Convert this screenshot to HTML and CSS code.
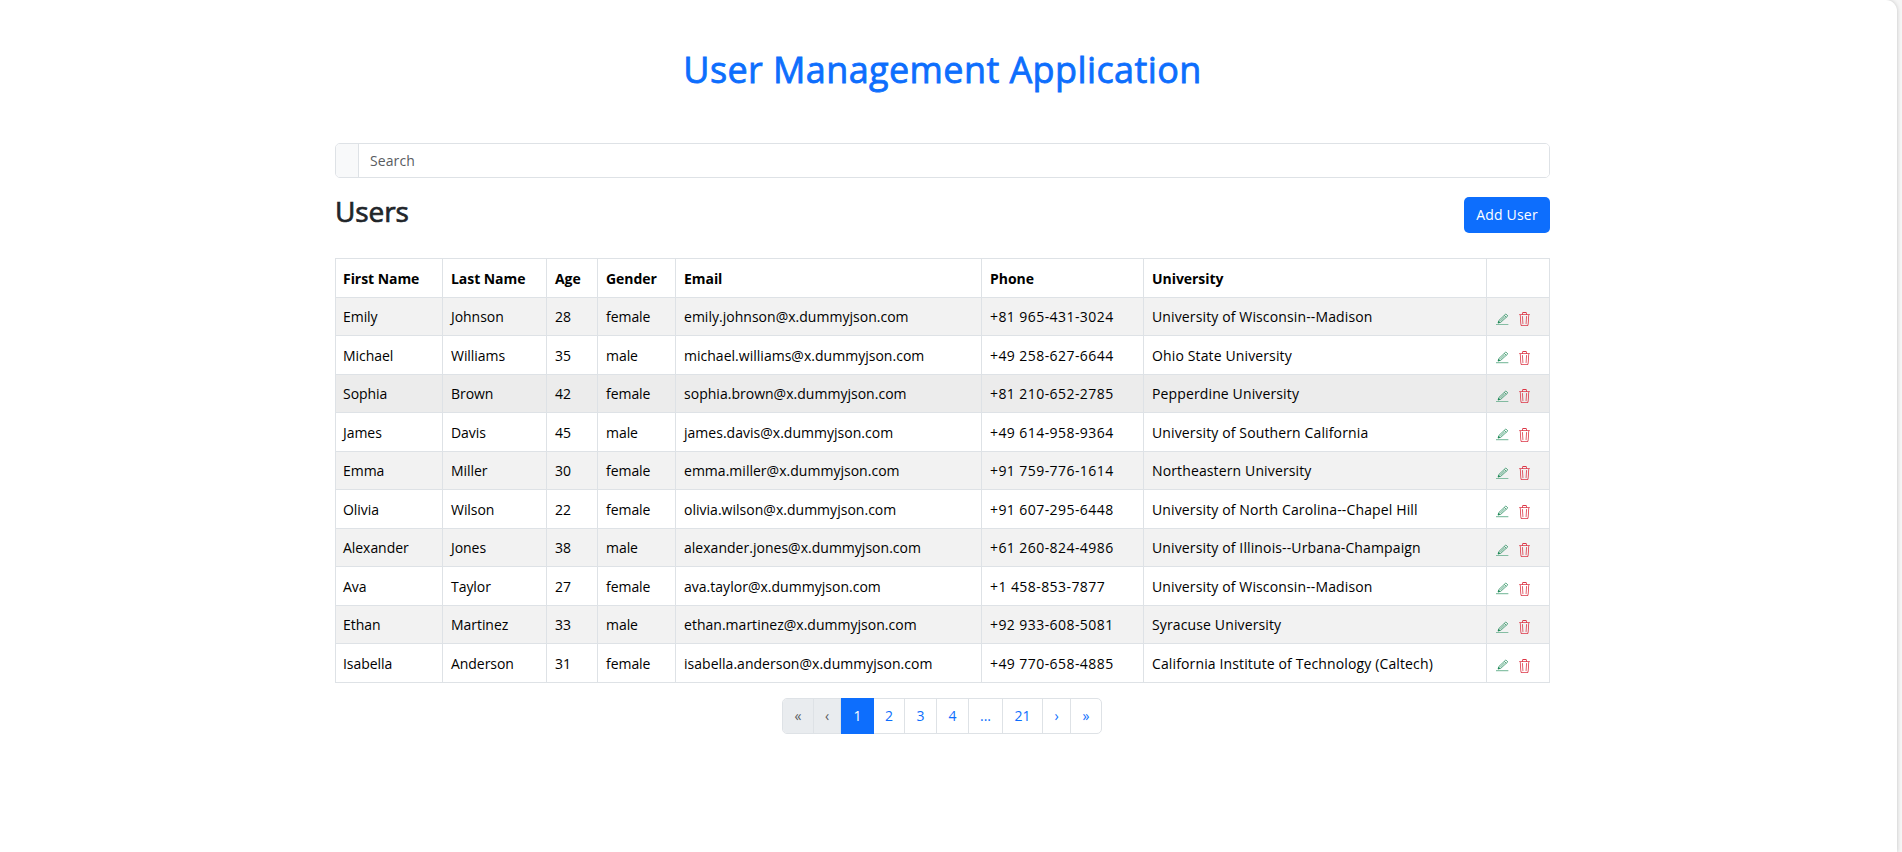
FILE: index.html
```html
<!DOCTYPE html>
<html lang="en">
<head>
<meta charset="utf-8">
<title>User Management Application</title>
<link rel="stylesheet" href="styles.css">
</head>
<body>
<svg class="sprite" width="0" height="0" aria-hidden="true">
  <symbol id="pen" viewBox="0 0 16 16">
    <path d="M12.500 1.200 15 3.700 6.300 11.600 2.600 12.800 3.800 9.300z M10.600 3l2.400 2.400 M5.600 10.200l5.500-5.500" fill="none" stroke="currentColor" stroke-width=".9"/>
    <path d="M2.400 13l.9-3.200 2.400 2.300z"/>
    <path d="M0 14.500h16v1.100H0z"/>
  </symbol>
  <symbol id="trash" viewBox="1 0 14 16" preserveAspectRatio="none">
    <path d="M6.5 1h3a.5.5 0 0 1 .5.5v1H6v-1a.5.5 0 0 1 .5-.5M11 2.5v-1A1.5 1.5 0 0 0 9.500 0h-3A1.500 1.500 0 0 0 5 1.500v1H1.500a.5.5 0 0 0 0 1h.538l.853 10.660A2 2 0 0 0 4.885 16h6.230a2 2 0 0 0 1.994-1.840l.853-10.660h.538a.5.5 0 0 0 0-1zm1.958 1-.846 10.580a1 1 0 0 1-.997.920h-6.230a1 1 0 0 1-.997-.920L3.042 3.500zm-7.487 1a.5.5 0 0 1 .528.470l.5 8.500a.5.5 0 0 1-.998.060L5 5.030a.5.5 0 0 1 .470-.530Zm5.058 0a.5.5 0 0 1 .470.530l-.5 8.500a.5.5 0 1 1-.998-.060l.5-8.500a.5.5 0 0 1 .528-.470"/>
  </symbol>
</svg>
<div class="shell">
  <main class="container">
    <h1 class="title">User Management Application</h1>
    <div class="search"><span class="search-addon"></span><input class="search-input" type="text" placeholder="Search"></div>
    <div class="toolbar"><h2 class="heading">Users</h2><button class="btn">Add User</button></div>
    <table class="users">
      <colgroup><col class="c-first"><col class="c-last"><col class="c-age"><col class="c-gender"><col class="c-email"><col class="c-phone"><col class="c-uni"><col class="c-act"></colgroup>
      <thead><tr><th>First Name</th><th>Last Name</th><th>Age</th><th>Gender</th><th>Email</th><th>Phone</th><th>University</th><th></th></tr></thead>
      <tbody id="rows"></tbody>
    </table>
    <ul class="pagination">
      <li class="page p-first disabled"><span class="arrow">«</span></li>
      <li class="page p-prev disabled"><span class="arrow">‹</span></li>
      <li class="page p-active">1</li>
      <li class="page p-two">2</li>
      <li class="page p-num">3</li>
      <li class="page p-num">4</li>
      <li class="page p-dots">...</li>
      <li class="page p-last-num">21</li>
      <li class="page p-next"><span class="arrow">›</span></li>
      <li class="page p-end"><span class="arrow">»</span></li>
    </ul>
  </main>
</div>
<script src="app.js"></script>
</body>
</html>
```

FILE: app.js
```js
const users = [
  ["Emily", "Johnson", 28, "female", "emily.johnson@x.dummyjson.com", "+81 965-431-3024", "University of Wisconsin--Madison"],
  ["Michael", "Williams", 35, "male", "michael.williams@x.dummyjson.com", "+49 258-627-6644", "Ohio State University"],
  ["Sophia", "Brown", 42, "female", "sophia.brown@x.dummyjson.com", "+81 210-652-2785", "Pepperdine University"],
  ["James", "Davis", 45, "male", "james.davis@x.dummyjson.com", "+49 614-958-9364", "University of Southern California"],
  ["Emma", "Miller", 30, "female", "emma.miller@x.dummyjson.com", "+91 759-776-1614", "Northeastern University"],
  ["Olivia", "Wilson", 22, "female", "olivia.wilson@x.dummyjson.com", "+91 607-295-6448", "University of North Carolina--Chapel Hill"],
  ["Alexander", "Jones", 38, "male", "alexander.jones@x.dummyjson.com", "+61 260-824-4986", "University of Illinois--Urbana-Champaign"],
  ["Ava", "Taylor", 27, "female", "ava.taylor@x.dummyjson.com", "+1 458-853-7877", "University of Wisconsin--Madison"],
  ["Ethan", "Martinez", 33, "male", "ethan.martinez@x.dummyjson.com", "+92 933-608-5081", "Syracuse University"],
  ["Isabella", "Anderson", 31, "female", "isabella.anderson@x.dummyjson.com", "+49 770-658-4885", "California Institute of Technology (Caltech)"]
];
const actions = '<td><div class="actions"><svg class="icon edit"><use href="#pen"/></svg><svg class="icon delete"><use href="#trash"/></svg></div></td>';
document.getElementById("rows").innerHTML = users.map((u, i) =>
  `<tr${i === 2 ? ' class="hovered"' : ""}>` + u.map(v => `<td><span>${v}</span></td>`).join("") + actions + "</tr>").join("");
```

FILE: styles.css
```css
* { box-sizing: border-box; }
body { margin: 0; height: 852px; overflow: hidden; background: #f5f5f5; color: #212529; font: 14px/21px "Open Sans", "Noto Sans", sans-serif; letter-spacing: -0.05px; }
.sprite { display: block; height: 0; }
.shell { width: 1897px; height: 852px; background: #fff; border-radius: 0 11px 0 0; box-shadow: 0 0 4px rgba(0,0,0,.2); padding-left: 335px; }
.container { width: 1215px; padding-top: 48px; }
.title { margin: 0; height: 95px; text-align: center; color: #0d6efd; font-size: 36px; line-height: 43px; font-weight: 500; letter-spacing: .4px; -webkit-text-stroke: .8px currentColor; }
.search { display: flex; height: 35px; border: 1px solid #dee2e6; border-radius: 5px; overflow: hidden; }
.search-addon { width: 23px; background: #f8f9fa; border-right: 1px solid #dee2e6; }
.search-input { flex: 1; border: 0; padding: 0 11px; font: inherit; letter-spacing: .1px; color: #212529; }
.search-input::placeholder { color: #595c5f; }
.toolbar { display: flex; justify-content: space-between; align-items: flex-start; height: 81px; padding-top: 19px; }
.heading { margin: -3px 0 0; font-size: 28px; line-height: 35px; font-weight: 500; letter-spacing: -.1px; -webkit-text-stroke: .7px currentColor; }
.btn { width: 86px; height: 36px; padding: 0 0 1px; border: 0; border-radius: 5px; background: #0d6efd; color: #fff; font: inherit; letter-spacing: .2px; }
.users { width: 1215px; margin-top: -1px; table-layout: fixed; border-collapse: collapse; color: #000; }
.c-first { width: 107px; } .c-last { width: 104px; } .c-age { width: 51px; } .c-gender { width: 78px; }
.c-email { width: 306px; } .c-phone { width: 162px; } .c-uni { width: 343px; } .c-act { width: 63px; }
.users th, .users td { height: 39px; padding: 0 7px 0 8px; border: 1px solid #dee2e6; text-align: left; white-space: nowrap; }
.users th:first-child, .users td:first-child { padding-left: 7px; }
.users th { font-weight: 700; }
.users td:nth-child(5) { letter-spacing: .02px; }
.users td:nth-child(6) { letter-spacing: .43px; }
.users td:nth-child(7) { letter-spacing: .13px; }
.users tbody tr:nth-child(odd) td { height: 38px; background: #f2f2f2; }
.users tbody tr.hovered td { background: #ececec; }
.actions { display: flex; align-items: center; gap: 10px; padding: 5px 0 0 1px; }
.icon { width: 12.600px; height: 12.600px; fill: currentColor; }
.edit { color: #198754; }
.delete { width: 11px; height: 14px; color: #dc3545; }
.pagination { display: flex; width: 320px; height: 36px; margin: 15px 0 0 447px; padding: 0; list-style: none; border: 1px solid #dee2e6; border-radius: 5px; }
.page { display: flex; align-items: center; justify-content: center; padding-bottom: 1px; border-right: 1px solid #dee2e6; color: #0d6efd; }
.disabled { background: #e9ecef; color: #595c5f; }
.p-first { width: 31px; border-radius: 4px 0 0 4px; } .p-prev { width: 27px; }
.p-active { width: 33px; margin: -1px 0; background: #0d6efd; color: #fff; border: 0; }
.p-two { width: 31px; } .p-num { width: 32px; } .p-dots { width: 34px; } .p-last-num { width: 40px; } .p-next { width: 28px; } .p-end { width: 30px; border: 0; }
.arrow { font-size: 14px; }
```
